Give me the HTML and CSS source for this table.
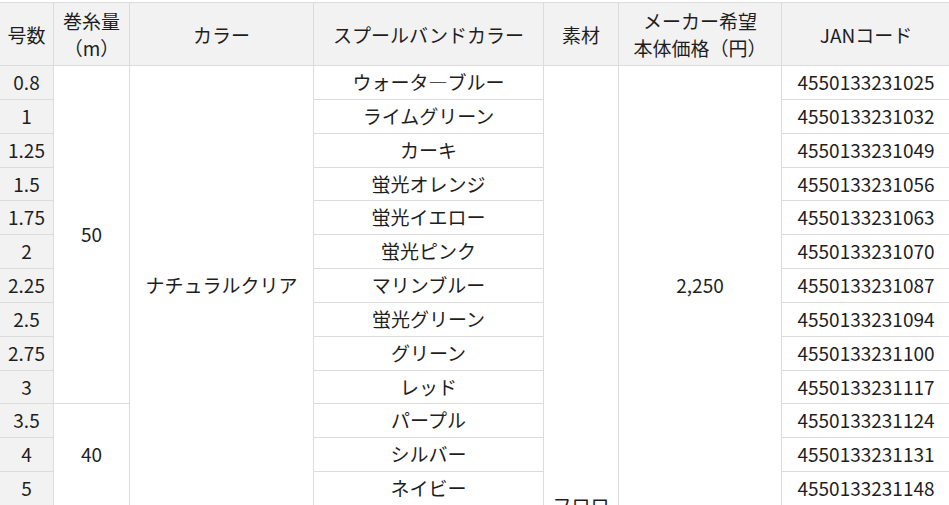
FILE: index.html
```html
<!DOCTYPE html>
<html lang="ja">
<head>
<meta charset="utf-8">
<title>スペック</title>
<link rel="stylesheet" href="styles.css">
</head>
<body>
<div class="wrap">
<table class="spec">
<colgroup>
<col class="c1"><col class="c2"><col class="c3"><col class="c4"><col class="c5"><col class="c6"><col class="c7">
</colgroup>
<thead>
<tr>
<th>号数</th>
<th>巻糸量<br>（m）</th>
<th>カラー</th>
<th>スプールバンドカラー</th>
<th>素材</th>
<th>メーカー希望<br>本体価格（円）</th>
<th>JANコード</th>
</tr>
</thead>
<tbody>
<tr><td class="no">0.8</td><td rowspan="10">50</td><td rowspan="13">ナチュラルクリア</td><td>ウォータ―ブルー</td><td rowspan="27" class="mat">フロロカーボン</td><td rowspan="13">2,250</td><td>4550133231025</td></tr>
<tr><td class="no">1</td><td>ライムグリーン</td><td>4550133231032</td></tr>
<tr><td class="no">1.25</td><td>カーキ</td><td>4550133231049</td></tr>
<tr><td class="no">1.5</td><td>蛍光オレンジ</td><td>4550133231056</td></tr>
<tr><td class="no">1.75</td><td>蛍光イエロー</td><td>4550133231063</td></tr>
<tr><td class="no">2</td><td>蛍光ピンク</td><td>4550133231070</td></tr>
<tr><td class="no">2.25</td><td>マリンブルー</td><td>4550133231087</td></tr>
<tr><td class="no">2.5</td><td>蛍光グリーン</td><td>4550133231094</td></tr>
<tr><td class="no">2.75</td><td>グリーン</td><td>4550133231100</td></tr>
<tr><td class="no">3</td><td>レッド</td><td>4550133231117</td></tr>
<tr><td class="no">3.5</td><td rowspan="3">40</td><td>パープル</td><td>4550133231124</td></tr>
<tr><td class="no">4</td><td>シルバー</td><td>4550133231131</td></tr>
<tr><td class="no">5</td><td>ネイビー</td><td>4550133231148</td></tr>
<tr><td class="no">6</td><td rowspan="14">30</td><td rowspan="14">ナチュラルクリア</td><td>ウォータ―ブルー</td><td rowspan="14">2,400</td><td>4550133231155</td></tr>
<tr><td class="no">7</td><td>ライムグリーン</td><td>4550133231162</td></tr>
<tr><td class="no">8</td><td>カーキ</td><td>4550133231179</td></tr>
<tr><td class="no">10</td><td>蛍光オレンジ</td><td>4550133231186</td></tr>
<tr><td class="no">12</td><td>蛍光イエロー</td><td>4550133231193</td></tr>
<tr><td class="no">14</td><td>蛍光ピンク</td><td>4550133231209</td></tr>
<tr><td class="no">16</td><td>マリンブルー</td><td>4550133231216</td></tr>
<tr><td class="no">18</td><td>蛍光グリーン</td><td>4550133231223</td></tr>
<tr><td class="no">20</td><td>グリーン</td><td>4550133231230</td></tr>
<tr><td class="no">22</td><td>レッド</td><td>4550133231247</td></tr>
<tr><td class="no">24</td><td>パープル</td><td>4550133231254</td></tr>
<tr><td class="no">26</td><td>シルバー</td><td>4550133231261</td></tr>
<tr><td class="no">28</td><td>ネイビー</td><td>4550133231278</td></tr>
<tr><td class="no">30</td><td>ブラック</td><td>4550133231285</td></tr>
</tbody>
</table>
</div>
</body>
</html>
```

FILE: styles.css
```css
html, body {
  margin: 0;
  padding: 0;
  background: #ffffff;
}

body {
  font-family: "Noto Sans CJK JP", "Noto Sans", sans-serif;
  color: #1e1e1e;
  overflow: hidden;
}

.wrap {
  padding-top: 2px;
  margin-left: -1px;
}

.spec {
  border-collapse: collapse;
  table-layout: fixed;
  width: 951px;
  font-size: 19px;
}

.c1 { width: 54px; }
.c2 { width: 76px; }
.c3 { width: 184px; }
.c4 { width: 230px; }
.c5 { width: 75px; }
.c6 { width: 163px; }
.c7 { width: 169px; }

.spec th,
.spec td {
  border: 1px solid #dcdcdc;
  text-align: center;
  vertical-align: middle;
  font-weight: normal;
  padding: 3px 8px;
  line-height: 26.85px;
}

.spec th {
  background: #f2f2f2;
  padding: 4px 4px;
  line-height: 27px;
}

.spec td.no {
  background: #f2f2f2;
  padding: 3px 2px;
}

.spec td.mat {
  padding-top: 22px;
}
```
